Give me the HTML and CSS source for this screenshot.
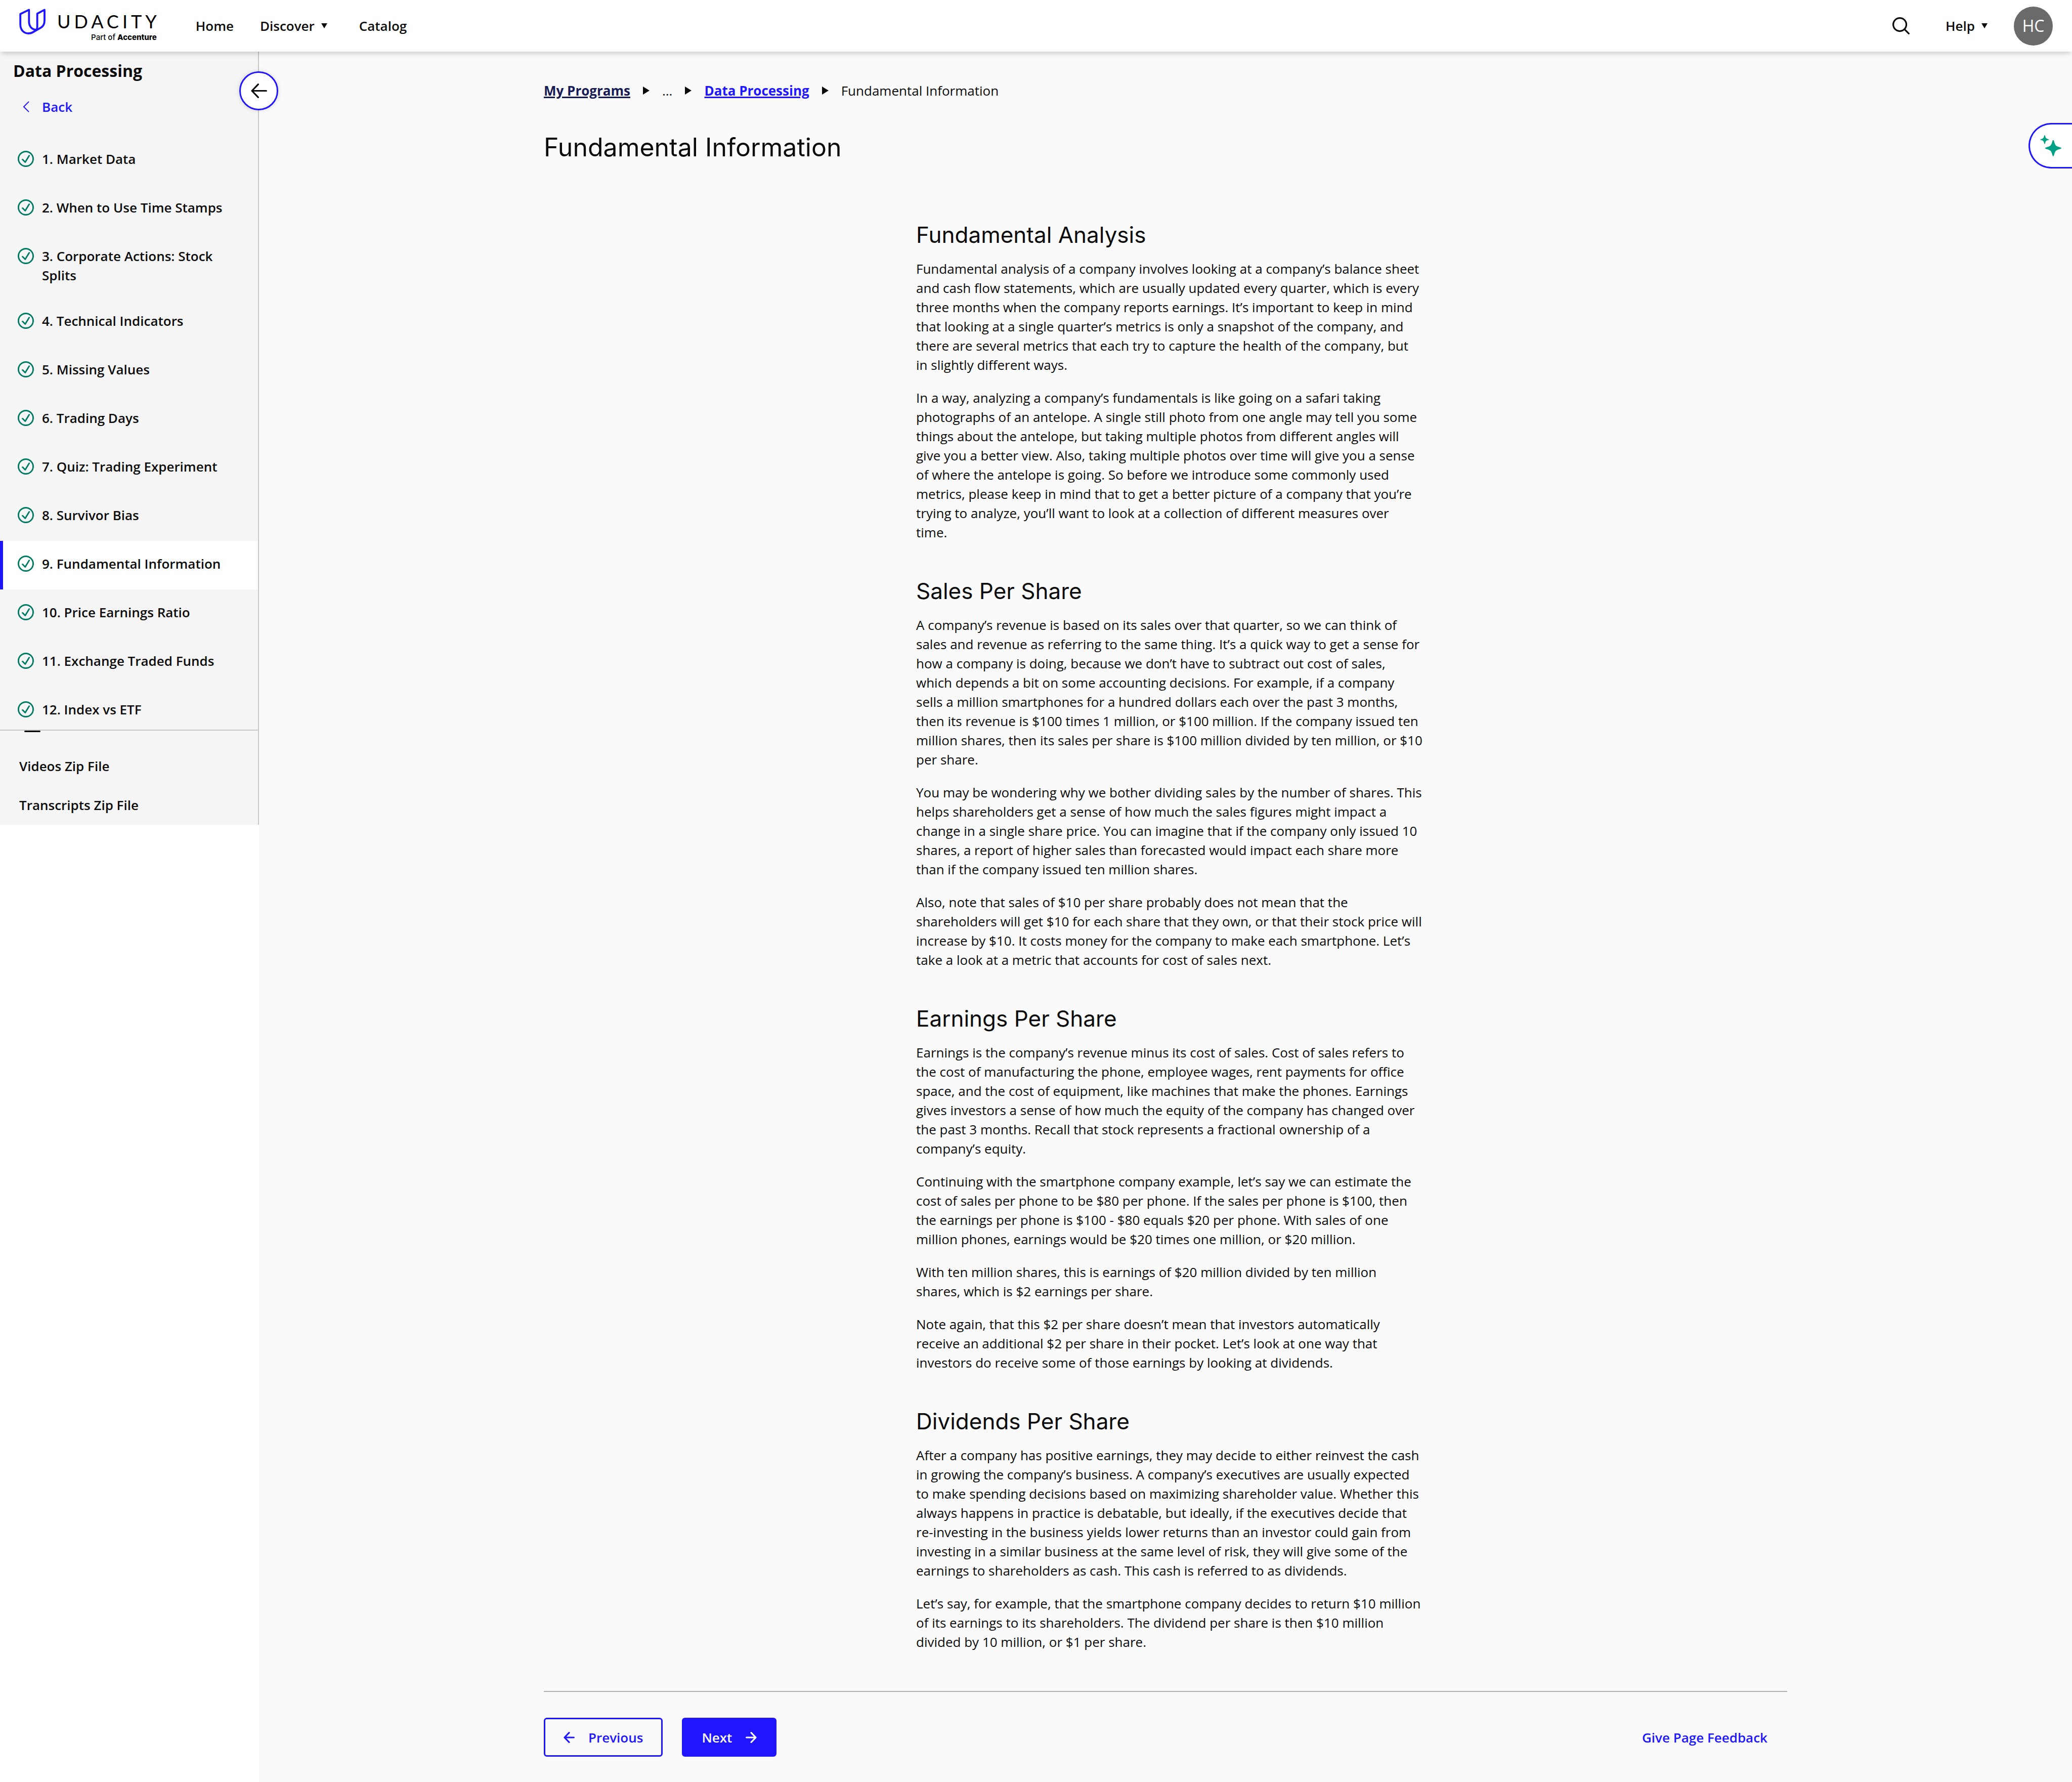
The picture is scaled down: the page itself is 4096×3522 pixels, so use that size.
FILE: index.html
```html
<!DOCTYPE html>
<html lang="en">
<head>
<meta charset="utf-8">
<meta name="viewport" content="width=device-width, initial-scale=1">
<title>Fundamental Information - Data Processing</title>
<link rel="stylesheet" href="styles.css">
</head>
<body>
<svg class="sprite" width="0" height="0" aria-hidden="true">
  <symbol id="check" viewBox="0 0 40 40"><circle cx="20" cy="20" r="18.2" fill="none" stroke="currentColor" stroke-width="3.600"/><path d="M12 21.500l6.500 6.500L28.500 12" fill="none" stroke="currentColor" stroke-width="3.600" stroke-linecap="round" stroke-linejoin="round"/></symbol>
  <symbol id="arrow-left" viewBox="0 0 28 28"><path d="M26 14H3M14 2L2.500 14 14 26" fill="none" stroke="currentColor" stroke-width="4" stroke-linecap="round" stroke-linejoin="round"/></symbol>
  <symbol id="arrow-right" viewBox="0 0 28 28"><path d="M2 14h23M14 2L25.500 14 14 26" fill="none" stroke="currentColor" stroke-width="4" stroke-linecap="round" stroke-linejoin="round"/></symbol>
</svg>

<header class="topbar">
  <a class="logo" href="#" aria-label="Udacity, part of Accenture">
    <svg class="logo-mark" viewBox="0 0 66 64" aria-hidden="true"><path d="M24 33V3L2.500 13.500V39C2.500 53 11 61.500 23 61.500Q28.500 61.500 33 59L53 47.500Q62.500 42 62.500 30V3L44.500 12.500V45Q44.500 50 42.500 52.500M24 32C24 44 31 52.500 43 52.500" fill="none" stroke="currentColor" stroke-width="4.800" stroke-linejoin="round"/></svg>
    <span class="logo-text">
      <span class="logo-name">UDACITY</span>
      <span class="logo-sub">Part of <b>Accenture</b></span>
    </span>
  </a>
  <nav class="topnav" aria-label="Main">
    <a href="#">Home</a>
    <button type="button" class="menu">Discover<span class="caret"></span></button>
    <a href="#">Catalog</a>
  </nav>
  <div class="tools">
    <button type="button" class="search" aria-label="Search"><svg viewBox="0 0 42 42" aria-hidden="true"><circle cx="18" cy="18" r="16" fill="none" stroke="currentColor" stroke-width="4"/><path d="M29.500 29.500L40 40" stroke="currentColor" stroke-width="4" stroke-linecap="round"/></svg></button>
    <button type="button" class="menu help">Help<span class="caret"></span></button>
    <button type="button" class="avatar">HC</button>
  </div>
</header>

<div class="layout">
  <div class="side-column">
    <aside class="sidebar">
      <h2 class="side-title">Data Processing</h2>
      <a class="back" href="#"><svg viewBox="0 0 14 24" aria-hidden="true"><path d="M12.500 1.500L2 12l10.500 10.500" fill="none" stroke="currentColor" stroke-width="2.200" stroke-linecap="round" stroke-linejoin="round"/></svg>Back</a>
      <nav class="lessons" aria-label="Lessons">
        <a class="lesson" href="#"><svg><use href="#check"/></svg><span>1. Market Data</span></a>
        <a class="lesson" href="#"><svg><use href="#check"/></svg><span>2. When to Use Time Stamps</span></a>
        <a class="lesson" href="#"><svg><use href="#check"/></svg><span>3. Corporate Actions: Stock Splits</span></a>
        <a class="lesson" href="#"><svg><use href="#check"/></svg><span>4. Technical Indicators</span></a>
        <a class="lesson" href="#"><svg><use href="#check"/></svg><span>5. Missing Values</span></a>
        <a class="lesson" href="#"><svg><use href="#check"/></svg><span>6. Trading Days</span></a>
        <a class="lesson" href="#"><svg><use href="#check"/></svg><span>7. Quiz: Trading Experiment</span></a>
        <a class="lesson" href="#"><svg><use href="#check"/></svg><span>8. Survivor Bias</span></a>
        <a class="lesson current" href="#" aria-current="page"><svg><use href="#check"/></svg><span>9. Fundamental Information</span></a>
        <a class="lesson" href="#"><svg><use href="#check"/></svg><span>10. Price Earnings Ratio</span></a>
        <a class="lesson" href="#"><svg><use href="#check"/></svg><span>11. Exchange Traded Funds</span></a>
        <a class="lesson" href="#"><svg><use href="#check"/></svg><span>12. Index vs ETF</span></a>
      </nav>
      <div class="downloads">
        <span class="tray"></span>
        <a href="#">Videos Zip File</a>
        <a href="#">Transcripts Zip File</a>
      </div>
      <button type="button" class="collapse" aria-label="Collapse sidebar"><svg viewBox="0 0 40 36" aria-hidden="true"><path d="M38 18H3M18 2L2.500 18 18 34" fill="none" stroke="currentColor" stroke-width="4" stroke-linecap="round" stroke-linejoin="round"/></svg></button>
    </aside>
  </div>

  <main class="main">
    <div class="content">
      <nav class="crumbs" aria-label="Breadcrumb">
        <a class="visited" href="#">My Programs</a>
        <span class="sep"></span>
        <span>...</span>
        <span class="sep"></span>
        <a href="#">Data Processing</a>
        <span class="sep"></span>
        <span>Fundamental Information</span>
      </nav>
      <h1>Fundamental Information</h1>

      <article class="article">
        <section>
          <h2>Fundamental Analysis</h2>
          <p>Fundamental analysis of a company involves looking at a company’s balance sheet and cash flow statements, which are usually updated every quarter, which is every three months when the company reports earnings. It’s important to keep in mind that looking at a single quarter’s metrics is only a snapshot of the company, and there are several metrics that each try to capture the health of the company, but in&nbsp;slightly different ways.</p>
          <p>In a way, analyzing a company’s fundamentals is like going on a safari taking photographs of an antelope. A single still photo from one angle may tell you some things about the antelope, but taking multiple photos from different angles will give you a better view. Also, taking multiple photos over time will give you a sense of where the antelope is going. So before we introduce some commonly used metrics, please keep in mind that to get a better picture of a company that you’re trying to analyze, you’ll want to look at a collection of different measures over time.</p>
        </section>
        <section>
          <h2>Sales Per Share</h2>
          <p>A company’s revenue is based on its sales over that quarter, so we can think of sales and revenue as referring to the same thing. It’s a quick way to get a sense for how a company is doing, because we don’t have to subtract out cost of sales, which depends a bit on some accounting decisions. For example, if a company sells a million smartphones for a hundred dollars each over the past 3 months, then its revenue is $100 times 1 million, or $100 million. If the company issued ten million shares, then its sales per share is $100 million divided by ten million, or $10 per share.</p>
          <p>You may be wondering why we bother dividing sales by the number of shares. This helps shareholders get a sense of how much the sales figures might impact a change in a single share price. You can imagine that if the company only issued 10 shares, a report of higher sales than forecasted would impact each share more than if the company issued ten million shares.</p>
          <p>Also, note that sales of $10 per share probably does not mean that the shareholders will get $10 for each share that they own, or that their stock price will increase by $10. It costs money for the company to make each smartphone. Let’s take a look at a metric that accounts for cost of sales next.</p>
        </section>
        <section>
          <h2>Earnings Per Share</h2>
          <p>Earnings is the company’s revenue minus its cost of sales. Cost of sales refers to the cost of manufacturing the phone, employee wages, rent payments for office space, and the cost of equipment, like machines that make the phones. Earnings gives investors a sense of how much the equity of the company has changed over the past 3 months. Recall that stock represents a fractional ownership of a company’s equity.</p>
          <p>Continuing with the smartphone company example, let’s say we can estimate the cost of sales per phone to be $80 per phone. If the sales per phone is $100, then the earnings per phone is $100 - $80 equals $20 per phone. With sales of one million phones, earnings would be $20 times one million, or $20 million.</p>
          <p>With ten million shares, this is earnings of $20 million divided by ten million shares, which is $2 earnings per share.</p>
          <p>Note again, that this $2 per share doesn’t mean that investors automatically receive an additional $2 per share in their pocket. Let’s look at one way that investors do receive some of those earnings by looking at dividends.</p>
        </section>
        <section>
          <h2>Dividends Per Share</h2>
          <p>After a company has positive earnings, they may decide to either reinvest the cash in growing the company’s business. A company’s executives are usually expected to make spending decisions based on maximizing shareholder value. Whether this always happens in practice is debatable, but ideally, if the executives decide that re-investing in the business yields lower returns than an investor could gain from investing in a similar business at the same level of risk, they will give some of the earnings to shareholders as cash. This cash is referred to as dividends.</p>
          <p>Let’s say, for example, that the smartphone company decides to return $10 million of its earnings to its shareholders. The dividend per share is then $10 million divided by 10 million, or $1 per share.</p>
        </section>
      </article>

      <footer class="pager">
        <button type="button" class="btn outline"><svg><use href="#arrow-left"/></svg>Previous</button>
        <button type="button" class="btn solid">Next<svg><use href="#arrow-right"/></svg></button>
        <a class="feedback" href="#">Give Page Feedback</a>
      </footer>
    </div>
    <button type="button" class="assistant" aria-label="Open assistant"><svg viewBox="0 0 52 52" aria-hidden="true"><path d="M32 12Q33.500 12 34 15Q36 23 38.500 25.500Q41 28 49 30Q52 30.800 52 32Q52 33.200 49 34Q41 36 38.500 38.500Q36 41 34 49Q33.200 52 32 52Q30.800 52 30 49Q28 41 25.500 38.500Q23 36 15 34Q12 33.200 12 32Q12 30.800 15 30Q23 28 25.500 25.500Q28 23 30 15Q30.800 12 32 12ZM11 0Q12 0 12.400 2.500Q13 6 14.500 7.500Q16 9 19.500 9.800Q22 10.200 22 11Q22 11.800 19.500 12.200Q16 13 14.500 14.500Q13 16 12.400 19.500Q12 22 11 22Q10 22 9.600 19.500Q9 16 7.500 14.500Q6 13 2.500 12.200Q0 11.800 0 11Q0 10.200 2.500 9.800Q6 9 7.500 7.500Q9 6 9.600 2.500Q10 0 11 0Z" fill="currentColor"/></svg></button>
  </main>
</div>
</body>
</html>
```
FILE: styles.css
```css
:root {
  --ink: #0b0b0b;
  --blue: #2015ff;
  --navy: #171a53;
  --green: #017a63;
  --line: #c8c8c8;
}

* { box-sizing: border-box; }

body {
  margin: 0;
  background: #fff;
  color: var(--ink);
  font: 400 26px/38px "Open Sans", "Noto Sans", sans-serif;
}

h1, h2, p { margin: 0; }
a { color: inherit; text-decoration: none; }
button {
  margin: 0;
  padding: 0;
  border: 0;
  background: none;
  color: inherit;
  font: inherit;
  cursor: pointer;
}
svg { display: block; flex: none; }
.sprite { position: absolute; }

/* Top bar */
.topbar {
  position: relative;
  z-index: 2;
  display: flex;
  align-items: center;
  height: 102px;
  padding: 0 38px;
  background: #fff;
  box-shadow: 0 6px 10px -3px rgba(0, 0, 0, .2);
  font-weight: 600;
}
.logo {
  display: flex;
  align-items: flex-start;
  align-self: flex-start;
  gap: 22px;
  padding-top: 17px;
}
.logo-mark { width: 53px; height: 51px; color: var(--blue); }
.logo-text {
  display: flex;
  flex-direction: column;
  align-items: flex-end;
  padding-top: 3px;
  color: #000;
}
.logo-name { font: 400 36px/44px Lato, sans-serif; letter-spacing: 7px; margin-right: -7px; }
.logo-sub { font: 500 15px/20px Inter, sans-serif; }
.logo-sub b { font-weight: 800; }
.topnav { display: flex; gap: 52px; margin-left: 77px; }
.menu { display: flex; align-items: center; gap: 13px; padding-right: 11px; }
.caret {
  border: solid transparent;
  border-width: 10px 6px 0;
  border-top-color: var(--ink);
}
.tools { display: flex; align-items: center; margin-left: auto; }
.search svg { width: 34px; height: 34px; }
.help { margin: 0 41px 0 71px; }
.avatar {
  width: 77px;
  height: 77px;
  border-radius: 50%;
  background: #6a6a6a;
  color: #fff;
  font-size: 32px;
  font-weight: 400;
}

/* Page columns */
.layout {
  display: grid;
  grid-template-columns: 512px minmax(0, 1fr);
  min-height: calc(100vh - 102px);
}
.side-column { position: relative; z-index: 1; }
.sidebar {
  position: relative;
  padding-top: 14px;
  border-right: 2px solid var(--line);
  background: #f5f5f5;
  font-weight: 600;
}
.side-title { padding: 0 26px; font-size: 32px; line-height: 48px; font-weight: 700; }
.back {
  display: flex;
  align-items: center;
  gap: 25px;
  margin: 28px 0 39px;
  padding-left: 45px;
  color: var(--blue);
}
.back svg { width: 13px; height: 22px; }
.lessons { max-height: 1173px; overflow: hidden; }
.lesson {
  display: flex;
  align-items: flex-start;
  gap: 16px;
  min-height: 96px;
  padding: 26px 51px 26px 35px;
}
.lesson svg { width: 32px; height: 32px; margin-top: 3px; color: var(--green); }
.current { background: #fff; box-shadow: inset 6px 0 var(--blue); }
.downloads {
  display: flex;
  flex-direction: column;
  align-items: flex-start;
  gap: 39px;
  padding: 0 38px 20px;
  border-top: 2px solid var(--line);
}
.tray { width: 32px; height: 3px; margin: 0 0 9px 10px; border-radius: 2px; background: var(--ink); }
.collapse {
  position: absolute;
  top: 39px;
  right: -40px;
  display: grid;
  place-items: center;
  width: 77px;
  height: 77px;
  border: 3px solid var(--blue);
  border-radius: 50%;
  background: #fff;
  box-shadow: 0 0 8px rgba(0, 0, 0, .15);
}
.collapse svg { width: 32px; height: 29px; }

/* Main area */
.main { position: relative; padding: 58px 51px 51px; background: #fafafa; }
.content { max-width: 2458px; margin: 0 auto; }
.crumbs { display: flex; align-items: center; gap: 25px; }
.crumbs a {
  color: var(--blue);
  font-weight: 700;
  text-decoration: underline;
  text-decoration-thickness: 3px;
}
.crumbs .visited { color: var(--navy); }
.sep {
  border: solid transparent;
  border-width: 8px 0 8px 13px;
  border-left-color: var(--ink);
}
h1 {
  margin: 63px 0 116px;
  font: 400 50px/60px Inter, "Liberation Sans", sans-serif;
}
.article {
  display: grid;
  gap: 70px;
  max-width: 1018px;
  margin: 0 auto;
  padding-left: 16px;
}
.article h2 {
  margin-bottom: 21px;
  font: 400 44px/54px Inter, "Liberation Sans", sans-serif;
}
.article p + p { margin-top: 27px; }

.pager {
  display: flex;
  align-items: center;
  gap: 38px;
  margin-top: 78px;
  padding: 51px 39px 0 0;
  border-top: 2px solid #b0b0b0;
  font-weight: 600;
}
.btn {
  display: flex;
  align-items: center;
  gap: 27px;
  height: 77px;
  padding: 0 36px;
  border: 3px solid var(--blue);
  border-radius: 6px;
}
.btn svg { width: 22px; height: 22px; }
.outline { color: var(--blue); }
.solid { background: var(--blue); color: #fff; }
.feedback { margin-left: auto; color: var(--blue); }

.assistant {
  position: absolute;
  top: 141px;
  right: 0;
  width: 86px;
  height: 90px;
  padding-left: 20px;
  border: 3px solid var(--blue);
  border-right: 0;
  border-radius: 45px 0 0 45px;
  background: #fff;
  color: #02a185;
}
.assistant svg { width: 42px; height: 42px; }
```
